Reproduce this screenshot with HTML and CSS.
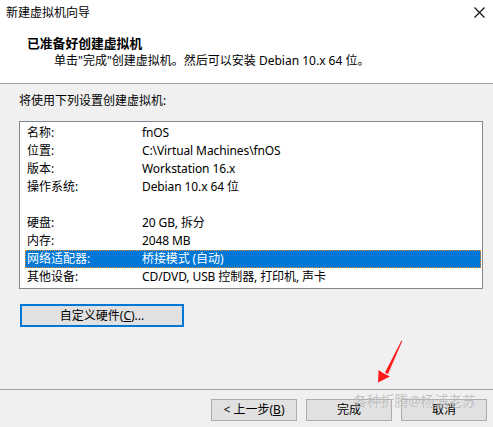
FILE: index.html
```html
<!DOCTYPE html>
<html lang="zh-CN">
<head>
<meta charset="utf-8">
<title>新建虚拟机向导</title>
<link rel="stylesheet" href="styles.css">
</head>
<body>
<div class="window">
  <div class="header">
    <div class="titlebar">
      <span class="title">新建虚拟机向导</span>
      <svg class="close" width="11" height="11" viewBox="0 0 11 11"><path d="M0.5 0.5 L10.5 10.5 M10.5 0.5 L0.5 10.5" stroke="#111" stroke-width="1.2" fill="none"/></svg>
    </div>
    <div class="heading">已准备好创建虚拟机</div>
    <div class="sub">单击"完成"创建虚拟机。然后可以安装 Debian 10.x 64 位。</div>
  </div>
  <div class="main">
    <div class="intro">将使用下列设置创建虚拟机:</div>
    <div class="listbox">
      <div class="row"><span class="k">名称:</span><span class="v">fnOS</span></div>
      <div class="row"><span class="k">位置:</span><span class="v">C:\Virtual Machines\fnOS</span></div>
      <div class="row"><span class="k">版本:</span><span class="v">Workstation 16.x</span></div>
      <div class="row"><span class="k">操作系统:</span><span class="v">Debian 10.x 64 位</span></div>
      <div class="row"></div>
      <div class="row"><span class="k">硬盘:</span><span class="v">20 GB, 拆分</span></div>
      <div class="row"><span class="k">内存:</span><span class="v">2048 MB</span></div>
      <div class="row selected"><span class="k">网络适配器:</span><span class="v">桥接模式 (自动)</span></div>
      <div class="row"><span class="k">其他设备:</span><span class="v">CD/DVD, USB 控制器, 打印机, 声卡</span></div>
    </div>
    <div class="custom-wrap">
      <button class="btn custom">自定义硬件(<u>C</u>)...</button>
    </div>
  </div>
  <div class="footer">
    <button class="btn">&lt; 上一步(<u>B</u>)</button>
    <button class="btn">完成</button>
    <button class="btn">取消</button>
  </div>
  <svg class="arrow" width="40" height="50" viewBox="0 0 40 50">
    <path d="M30.5 0.5 L31.3 1 L17 34 L14 32.5 Z" fill="#ff1a1a"/>
    <path d="M7 42.5 L7.6 30 L12 33 L19 36.5 L18 37 Z" fill="#ff1a1a"/>
  </svg>
  <div class="watermark">各种折腾@杨浦老苏</div>
</div>
</body>
</html>
```
FILE: styles.css
```css
* { box-sizing: border-box; }
html, body {
  margin: 0;
  padding: 0;
}
body {
  width: 493px;
  height: 427px;
  overflow: hidden;
  background: #f0f0f0;
  font-family: "Noto Sans", "Noto Sans CJK SC", sans-serif;
  font-size: 12px;
  color: #000;
}
.window {
  position: relative;
  width: 493px;
  height: 427px;
  display: flex;
  flex-direction: column;
}
.header {
  background: #fff;
  height: 84px;
  border-bottom: 1px solid #a0a0a0;
}
.titlebar {
  height: 26px;
  display: flex;
  align-items: center;
  justify-content: space-between;
  padding: 0 8px 0 6px;
}
.title {
  font-size: 12px;
  line-height: 16px;
  color: #000;
}
.close {
  display: block;
  margin-top: -1px;
}
.heading {
  margin-top: 9px;
  padding-left: 27px;
  font-weight: bold;
  font-size: 12.8px;
  line-height: 16px;
}
.sub {
  margin-top: 2px;
  padding-left: 54px;
  line-height: 16px;
}
.main {
  padding: 0 10px 0 19px;
  height: 305px;
}
.intro {
  margin-top: 9px;
  line-height: 16px;
}
.listbox {
  margin-top: 12px;
  width: 464px;
  height: 168px;
  background: #fff;
  border: 1px solid #828790;
  padding: 2px 1px 0 5px;
}
.row {
  height: 18px;
  line-height: 18px;
  display: grid;
  grid-template-columns: 115px 1fr;
  padding-left: 2px;
  white-space: nowrap;
}
.row .v {
  letter-spacing: -0.1px;
}
.row.selected {
  background: #0078d7;
  color: #fff;
  outline: 1px dotted #f08a24;
  outline-offset: -1px;
}
.custom-wrap {
  margin-top: 15px;
  padding-left: 1px;
}
.btn {
  font-family: "Noto Sans", "Noto Sans CJK SC", sans-serif;
  font-size: 12px;
  color: #000;
  background: #e1e1e1;
  border: 1px solid #adadad;
  width: 86px;
  height: 22px;
  padding: 0;
  line-height: 18px;
  display: flex;
  align-items: center;
  justify-content: center;
}
.btn u {
  text-underline-offset: 1px;
}
.custom {
  width: 164px;
  height: 23px;
  border: 2px solid #0078d7;
}
.footer {
  border-top: 1px solid #a0a0a0;
  height: 38px;
  display: flex;
  justify-content: flex-end;
  gap: 9px;
  padding: 9px 6px 0 0;
  margin-top: auto;
}
.arrow {
  position: absolute;
  left: 371px;
  top: 340px;
}
.watermark {
  position: absolute;
  left: 353px;
  top: 392px;
  font-size: 14px;
  line-height: 18px;
  color: rgba(140, 140, 140, 0.5);
  text-shadow: 0 0 1px rgba(255,255,255,0.6);
  white-space: nowrap;
  letter-spacing: -0.2px;
}
```
